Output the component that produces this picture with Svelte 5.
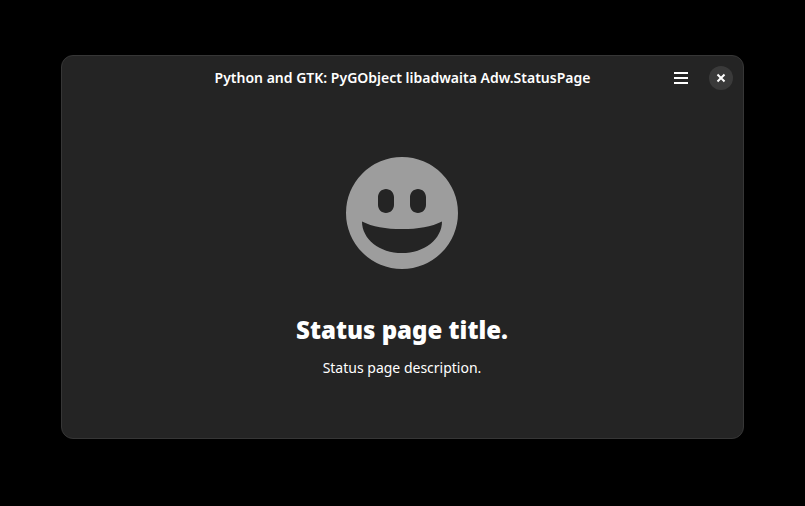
<script>
  const title = 'Python and GTK: PyGObject libadwaita Adw.StatusPage';
</script>

<div class="desktop">
  <section class="window" aria-label={title}>
    <header>
      <h1>{title}</h1>
      <div class="controls">
        <button class="menu" aria-label="Main menu">
          <svg width="16" height="16" viewBox="0 0 16 16" aria-hidden="true">
            <path d="M1 2h14v2H1zM1 7h14v2H1zM1 12h14v2H1z" fill="currentColor" />
          </svg>
        </button>
        <button class="close" aria-label="Close">
          <svg width="16" height="16" viewBox="0 0 16 16" aria-hidden="true">
            <path d="M5.200 5.200l5.600 5.600M10.800 5.200l-5.600 5.600" fill="none" stroke="currentColor" stroke-width="2" stroke-linecap="square" />
          </svg>
        </button>
      </div>
    </header>
    <main>
      <svg class="face" width="128" height="128" viewBox="0 0 16 16" aria-hidden="true">
        <path
          fill="currentColor"
          fill-rule="evenodd"
          d="M8 1a7 7 0 1 0 0 14A7 7 0 0 0 8 1zM6 5c.55 0 1 .45 1 1v1c0 .55-.45 1-1 1s-1-.45-1-1V6c0-.55.45-1 1-1zM10 5c.55 0 1 .45 1 1v1c0 .55-.45 1-1 1s-1-.45-1-1V6c0-.55.45-1 1-1zM3 9.05c1.3.65 3 .95 5 .95s3.700-.3 5-.95C13 11.250 10.800 13 8 13S3 11.250 3 9.050z"
        />
      </svg>
      <h2>Status page title.</h2>
      <p>Status page description.</p>
    </main>
  </section>
</div>

<style>
  :global(body) {
    margin: 0;
    background: #000;
  }
  .desktop {
    box-sizing: border-box;
    min-height: 100vh;
    padding: 55px 61px 67px;
    display: flex;
    background: #000;
    color: #fff;
    font-family: "Noto Sans", "Open Sans", sans-serif;
  }
  .window {
    box-sizing: border-box;
    flex: 1;
    display: flex;
    flex-direction: column;
    border: 1px solid #363636;
    border-radius: 12px;
    background: #242424;
  }
  header {
    display: grid;
    grid-template-columns: 1fr auto 1fr;
    align-items: center;
    height: 44px;
    padding: 0 10px;
  }
  h1 {
    grid-column: 2;
    margin: 0;
    font-size: 14px;
    line-height: 20px;
    font-weight: 600;
    white-space: nowrap;
  }
  .controls {
    display: flex;
    justify-content: flex-end;
    align-items: center;
    gap: 11px;
  }
  button {
    display: grid;
    place-items: center;
    padding: 0;
    border: 0;
    background: none;
    color: inherit;
  }
  .menu {
    width: 34px;
    height: 34px;
  }
  .close {
    width: 24px;
    height: 24px;
    border-radius: 50%;
    background: #3a3a3a;
  }
  main {
    flex: 1;
    display: flex;
    flex-direction: column;
    align-items: center;
    justify-content: center;
    padding: 0 1px 12px 0;
    text-align: center;
  }
  .face {
    display: block;
    color: #9d9d9d;
  }
  h2 {
    margin: 35px 0 10px;
    font-size: 24px;
    line-height: 36px;
    font-weight: 900;
  }
  p {
    margin: 0;
    font-size: 14px;
    line-height: 20px;
  }
</style>
